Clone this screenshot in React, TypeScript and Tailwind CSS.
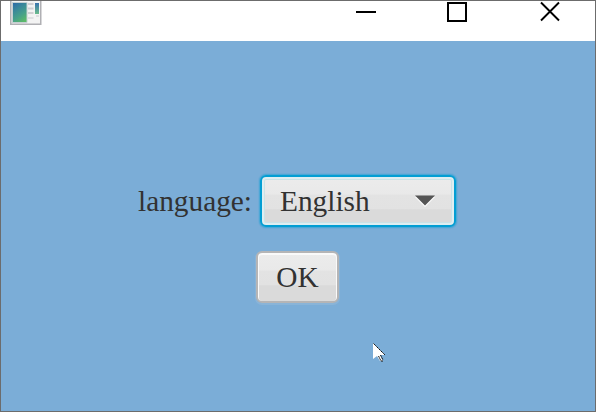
function AppIcon() {
  return (
    <svg width="34" height="25" viewBox="0 0 34 25" className="block">
      <defs>
        <linearGradient id="screen" x1="0.2" y1="0" x2="0.7" y2="1">
          <stop offset="0" stopColor="#2f6ea6" />
          <stop offset="0.35" stopColor="#3b8b98" />
          <stop offset="0.65" stopColor="#46a08a" />
          <stop offset="1" stopColor="#5cba68" />
        </linearGradient>
        <linearGradient id="strip" x1="0" y1="0" x2="0" y2="1">
          <stop offset="0" stopColor="#3a74ae" />
          <stop offset="1" stopColor="#6cbc8c" />
        </linearGradient>
      </defs>
      <path d="M0.750 -1h30v24.300h-30z" fill="#f3f3f3" stroke="#b0b0b4" strokeWidth="1.500" />
      <path d="M2.500 1.500h14.500v20h-14.500z" fill="url(#screen)" stroke="#c5d0d2" strokeWidth="1" />
      <path d="M18 3h5.500M18 7.500h5.500M18 12h5.500" stroke="#cfcfd2" strokeWidth="1.800" />
      <path d="M18 17h5.500M26 15h3" stroke="#d8d8dc" strokeWidth="1.500" />
      <path d="M25 2h4v11h-4z" fill="url(#strip)" />
    </svg>
  );
}

function TitleBar() {
  return (
    <header className="flex h-10 shrink-0 items-start bg-white pl-[9px] pr-[35px]">
      <AppIcon />
      <div className="ml-auto flex text-black">
        <svg width="20" height="22" viewBox="0 0 20 22" aria-label="Minimize">
          <path d="M0 10h20v2h-20z" fill="currentColor" />
        </svg>
        <svg className="ml-[71px]" width="20" height="22" viewBox="0 0 20 22" aria-label="Maximize">
          <path d="M1 2h18v18h-18z" fill="none" stroke="currentColor" strokeWidth="2" />
        </svg>
        <svg className="ml-[73px]" width="20" height="22" viewBox="0 0 20 22" aria-label="Close">
          <path d="M1 1.500l18 18M19 1.500l-18 18" stroke="currentColor" strokeWidth="1.900" />
        </svg>
      </div>
    </header>
  );
}

const face =
  "bg-[linear-gradient(to_bottom,#ececec_0%,#e9e9e9_36%,#e3e3e3_37%,#e2e2e2_67%,#dadada_68%,#dadada_100%)]";

export default function App() {
  return (
    <div className="relative flex h-[412px] w-[596px] flex-col overflow-hidden border border-[#6c6c6c] bg-[#7badd7] font-['Liberation_Serif',serif] text-[29.333px] leading-[34px] text-[#323232]">
      <TitleBar />
      <main className="flex flex-col pt-[134px]">
        <div className="flex items-center pl-[137px]">
          <label className="w-[122px] whitespace-nowrap">language:</label>
          <button
            className={`flex h-[52px] w-[196px] items-center justify-between rounded-[6px] border-[2px] border-[#039ed3] pl-[18px] pr-[19px] text-left shadow-[0_0_0_1px_rgba(3,158,211,0.32),0_0_0_2px_rgba(3,158,211,0.1),inset_0_0_0_2px_#dfeef1,inset_0_0_0_3px_#cbe2e6] ${face}`}
          >
            <span>English</span>
            <svg width="20" height="12" viewBox="0 0 20 12">
              <path d="M0 2h20l-10 10z" fill="#ffffff" />
              <path d="M0 0.500h20l-10 10z" fill="#555555" />
            </svg>
          </button>
        </div>
        <div className="flex pl-[255px] pt-6">
          <button
            className={`h-[52px] w-[83px] rounded-[6px] border-2 border-[#b5b5b6] text-center shadow-[0_1px_0_1px_rgba(160,190,218,0.4),inset_0_1px_0_1px_#fafafa] ${face}`}
          >
            OK
          </button>
        </div>
      </main>
      <svg className="absolute left-[372px] top-[342px]" width="14" height="20" viewBox="0 0 14 20">
        <path d="M0 0l12 12h-5l3 6h-3l-3-5-4 3z" fill="#ffffff" />
        <path d="M0.500 0.500l11.500 11.500M5.500 13l2.500 5M7.500 12l2.500 5M8 18h2" stroke="#111111" strokeWidth="1" fill="none" strokeDasharray="2 0.500" />
      </svg>
    </div>
  );
}
